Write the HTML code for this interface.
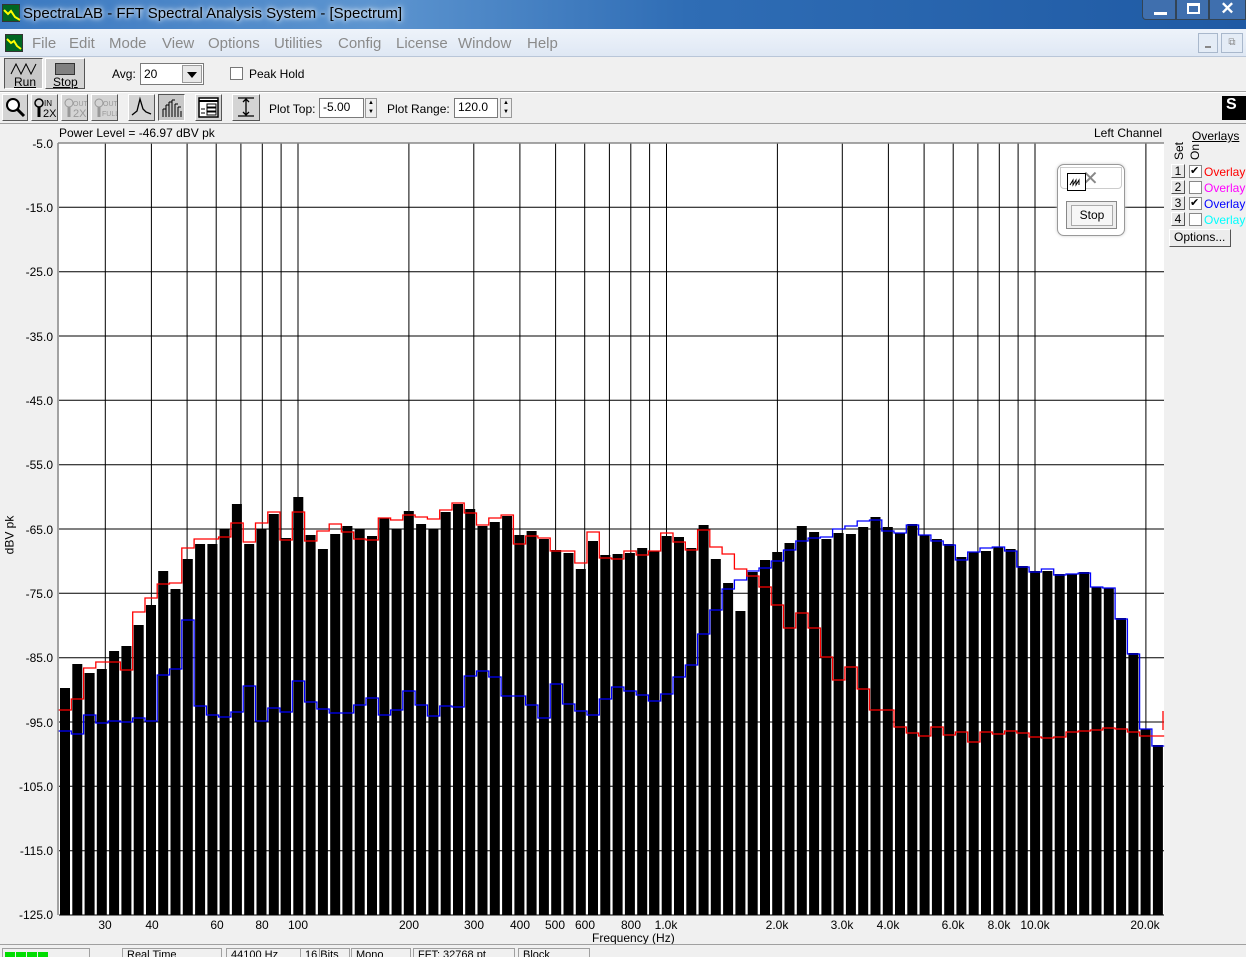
<!DOCTYPE html>
<html><head><meta charset="utf-8"><style>
*{margin:0;padding:0;box-sizing:border-box}
body{width:1246px;height:955px;overflow:hidden;background:#f0f0f0;font-family:"Liberation Sans",sans-serif;position:relative;font-size:12px;color:#000}
.a{position:absolute}
.title{left:0;top:0;width:1246px;height:29px;background:linear-gradient(90deg,#3a78c0 0%,#5d95d0 30%,#2f6db5 55%,#1f5aa4 100%);}
.menu{left:0;top:29px;width:1246px;height:28px;background:linear-gradient(#eef3fa,#dfe8f4);border-bottom:1px solid #b9c6d8}
.menu span{position:absolute;top:6px;font-size:15px;color:#8a8a8a}
.btn{position:absolute;background:#d4d4d4;border:1px solid;border-color:#fff #555 #555 #fff}
.btn.p{border-color:#555 #fff #fff #555;background:#c8c8c8}
.inp{position:absolute;background:#fff;border:1px solid #7a7a7a;font-size:12px;padding:1px 3px}
.yl{position:absolute;right:1193px;font-size:12px;text-align:right}
.xl{position:absolute;top:918px;font-size:12px;transform:translateX(-50%)}
.sb{position:absolute;top:948px;height:9px;border:1px solid #a0a0a0;border-bottom:none;font-size:11px;padding-left:4px;line-height:12px;overflow:hidden}
</style></head><body>
<div class="a title">
 <div class="a" style="left:2px;top:4px;width:18px;height:18px;background:#062;border:1px solid #333"><svg width="18" height="18"><path d="M1 5 L5 9 L8 6 L12 12 L17 15" stroke="#ff0" stroke-width="2" fill="none"/></svg></div>
 <div class="a" style="left:23px;top:5px;font-size:15px;color:#000;text-shadow:0 0 8px #fff,0 0 4px #fff">SpectraLAB - FFT Spectral Analysis System - [Spectrum]</div>
 <div class="a" style="left:1142px;top:0;width:34px;height:20px;border:1px solid #345;border-top:none;border-radius:0 0 0 4px;background:#3f6fae"><div class="a" style="left:11px;top:12px;width:13px;height:3px;background:#fff"></div></div>
 <div class="a" style="left:1176px;top:0;width:33px;height:20px;border:1px solid #345;border-top:none;background:#3f6fae"><div class="a" style="left:10px;top:3px;width:13px;height:11px;border:2px solid #fff;border-top-width:3px"></div></div>
 <div class="a" style="left:1209px;top:0;width:37px;height:20px;border:1px solid #345;border-top:none;background:#3f6fae;color:#fff;font-weight:bold;font-size:17px;text-align:center;line-height:17px">✕</div>
</div>
<div class="a menu">
 <div class="a" style="left:5px;top:5px;width:18px;height:18px;background:#062;border:1px solid #333"><svg width="16" height="16"><path d="M1 4 L5 8 L8 6 L11 11 L15 14" stroke="#ff0" stroke-width="2" fill="none"/></svg></div>
 <span style="left:32px">File</span><span style="left:69px">Edit</span><span style="left:109px">Mode</span><span style="left:162px">View</span><span style="left:208px">Options</span><span style="left:274px">Utilities</span><span style="left:338px">Config</span><span style="left:396px">License</span><span style="left:458px">Window</span><span style="left:527px">Help</span>
 <div class="a" style="left:1198px;top:4px;width:20px;height:20px;border:1px solid #a9b8cc;background:#e4ecf6"><div class="a" style="left:6px;top:12px;width:6px;height:2px;background:#888"></div></div>
 <div class="a" style="left:1221px;top:4px;width:22px;height:20px;border:1px solid #a9b8cc;background:#e4ecf6;color:#888;font-size:10px;text-align:center;line-height:18px">⧉</div>
</div>
<!-- toolbar 1 -->
<div class="btn p" style="left:4px;top:58px;width:39px;height:31px"><svg class="a" style="left:5px;top:3px" width="30" height="14"><path d="M1 12 L6 2 L11 12 L16 2 L21 12 L26 2" stroke="#000" fill="none"/></svg><div class="a" style="left:9px;top:16px;font-size:12px;text-decoration:underline">Run</div></div>
<div class="btn" style="left:45px;top:58px;width:40px;height:31px"><div class="a" style="left:9px;top:4px;width:20px;height:12px;background:#808080;border:1px solid #333"></div><div class="a" style="left:7px;top:16px;font-size:12px;text-decoration:underline">Stop</div></div>
<div class="a" style="left:112px;top:67px">Avg:</div>
<div class="inp" style="left:140px;top:63px;width:64px;height:22px;padding-top:3px">20<div class="a" style="right:1px;top:1px;width:20px;height:18px;background:#e8e8e8;border:1px solid #999"><div class="a" style="left:4px;top:6px;border:5px solid transparent;border-top:6px solid #000"></div></div></div>
<div class="a" style="left:230px;top:67px;width:13px;height:13px;border:1px solid #777;background:#fff"></div>
<div class="a" style="left:249px;top:67px">Peak Hold</div>
<div class="a" style="left:0;top:91px;width:1246px;height:1px;background:#a0a0a0"></div>
<div class="a" style="left:0;top:92px;width:1246px;height:1px;background:#fff"></div>
<!-- toolbar 2 -->
<div class="btn" style="left:2px;top:94px;width:26px;height:27px"><svg width="24" height="25"><circle cx="10" cy="10" r="6" stroke="#000" stroke-width="2" fill="#fff"/><path d="M14 14 L21 21" stroke="#000" stroke-width="3"/></svg></div>
<div class="btn" style="left:31px;top:94px;width:27px;height:27px;font-size:9px"><svg class="a" style="left:1px;top:2px" width="24" height="22"><circle cx="6" cy="6" r="4" stroke="#000" fill="none" stroke-width="1.5"/><path d="M6 10 V20" stroke="#000" stroke-width="3"/><text x="11" y="9" font-size="8" font-family="Liberation Sans">IN</text><text x="10" y="20" font-size="11" font-family="Liberation Sans">2X</text></svg></div>
<div class="btn" style="left:61px;top:94px;width:27px;height:27px"><svg class="a" style="left:1px;top:2px" width="24" height="22"><circle cx="6" cy="6" r="4" stroke="#999" fill="none"/><path d="M6 10 V20" stroke="#999" stroke-width="3"/><text x="10" y="9" font-size="7" fill="#999" font-family="Liberation Sans">OUT</text><text x="10" y="20" font-size="11" fill="#999" font-family="Liberation Sans">2X</text></svg></div>
<div class="btn" style="left:91px;top:94px;width:27px;height:27px"><svg class="a" style="left:1px;top:2px" width="24" height="22"><circle cx="6" cy="6" r="4" stroke="#999" fill="none"/><path d="M6 10 V20" stroke="#999" stroke-width="3"/><text x="10" y="9" font-size="7" fill="#999" font-family="Liberation Sans">OUT</text><text x="9" y="19" font-size="7" fill="#999" font-family="Liberation Sans">FULL</text></svg></div>
<div class="btn" style="left:128px;top:94px;width:27px;height:27px"><svg width="25" height="25"><path d="M3 20 L8 16 L11 4 L14 14 L17 17 L22 19" stroke="#000" fill="none" stroke-width="1.3"/></svg></div>
<div class="btn p" style="left:158px;top:94px;width:27px;height:27px"><svg width="25" height="25"><path d="M4 22 V14 M7 22 V10 M10 22 V7 M13 22 V5 M16 22 V9 M19 22 V12 M22 22 V16 M4 14 H7 M7 10 H10 M10 7 H13 M13 5 H16 M16 9 H19 M19 12 H22" stroke="#000" fill="none"/></svg></div>
<div class="btn" style="left:195px;top:94px;width:27px;height:27px"><svg width="25" height="25"><rect x="3" y="3" width="19" height="19" fill="#fff" stroke="#000" stroke-width="1.5"/><path d="M3 6 H22" stroke="#000" stroke-width="2"/><rect x="11" y="9" width="9" height="3" fill="none" stroke="#000"/><rect x="11" y="13" width="9" height="3" fill="none" stroke="#000"/><rect x="11" y="17" width="9" height="3" fill="none" stroke="#000"/><path d="M5 14 H9 M5 18 H9" stroke="#000"/></svg></div>
<div class="btn" style="left:232px;top:94px;width:28px;height:27px"><svg width="26" height="25"><path d="M5 3 H21 M5 21 H21 M13 4 V20 M10 7 L13 4 L16 7 M10 17 L13 20 L16 17" stroke="#000" fill="none" stroke-width="1.3"/></svg></div>
<div class="a" style="left:269px;top:102px">Plot Top:</div>
<div class="inp" style="left:319px;top:98px;width:45px;height:20px">-5.00</div>
<div class="a" style="left:365px;top:98px;width:12px;height:20px;border:1px solid #999;background:#eee;font-size:6px;text-align:center;line-height:9px">▲<br>▼</div>
<div class="a" style="left:387px;top:102px">Plot Range:</div>
<div class="inp" style="left:454px;top:98px;width:44px;height:20px">120.0</div>
<div class="a" style="left:500px;top:98px;width:12px;height:20px;border:1px solid #999;background:#eee;font-size:6px;text-align:center;line-height:9px">▲<br>▼</div>
<div class="a" style="left:1222px;top:96px;width:24px;height:24px;background:#000;color:#fff;font-weight:bold;font-size:16px;padding-left:4px">S</div>
<div class="a" style="left:0;top:123px;width:1246px;height:1px;background:#a0a0a0"></div>
<!-- chart labels -->
<div class="a" style="left:59px;top:126px">Power Level = -46.97 dBV pk</div>
<div class="a" style="left:1094px;top:126px">Left Channel</div>
<div class="yl" style="top:137px">-5.0</div><div class="yl" style="top:201px">-15.0</div><div class="yl" style="top:265px">-25.0</div><div class="yl" style="top:330px">-35.0</div><div class="yl" style="top:394px">-45.0</div><div class="yl" style="top:458px">-55.0</div><div class="yl" style="top:523px">-65.0</div><div class="yl" style="top:587px">-75.0</div><div class="yl" style="top:651px">-85.0</div><div class="yl" style="top:716px">-95.0</div><div class="yl" style="top:780px">-105.0</div><div class="yl" style="top:844px">-115.0</div><div class="yl" style="top:908px">-125.0</div>
<div class="a" style="left:-10px;top:528px;transform:rotate(-90deg);font-size:12px">dBV pk</div>
<div class="xl" style="left:105px">30</div><div class="xl" style="left:152px">40</div><div class="xl" style="left:217px">60</div><div class="xl" style="left:262px">80</div><div class="xl" style="left:298px">100</div><div class="xl" style="left:409px">200</div><div class="xl" style="left:474px">300</div><div class="xl" style="left:520px">400</div><div class="xl" style="left:555px">500</div><div class="xl" style="left:585px">600</div><div class="xl" style="left:631px">800</div><div class="xl" style="left:666px">1.0k</div><div class="xl" style="left:777px">2.0k</div><div class="xl" style="left:842px">3.0k</div><div class="xl" style="left:888px">4.0k</div><div class="xl" style="left:953px">6.0k</div><div class="xl" style="left:999px">8.0k</div><div class="xl" style="left:1035px">10.0k</div><div class="xl" style="left:1145px">20.0k</div>
<div class="a" style="left:592px;top:931px">Frequency (Hz)</div>
<svg class="a" id="ch" style="left:0;top:0" width="1246" height="955"></svg>
<!-- stop popup -->
<div class="a" style="left:1057px;top:164px;width:68px;height:72px;background:#fff;border:1px solid #999;border-radius:7px;box-shadow:0 0 3px #ccc">
 <div class="a" style="left:2px;top:2px;width:62px;height:22px;border:1px solid #ccc;border-radius:0 0 4px 4px"></div>
 <div class="a" style="left:24px;top:1px;font-size:20px;color:#888">✕</div>
 <div class="a" style="left:9px;top:8px;width:19px;height:18px;background:#fff;border:1.5px solid #000"><svg width="16" height="14"><path d="M2 11 L5 6 V11 L8 6 V11 L11 6 V11" stroke="#000" fill="none"/></svg></div>
 <div class="a" style="left:8px;top:36px;width:51px;height:28px;border:1px solid #888;background:#eee"><div class="a" style="left:4px;top:3px;width:42px;height:21px;border:1px solid #aaa;background:#f6f6f6;text-align:center;line-height:19px">Stop</div></div>
</div>
<!-- overlays -->
<div class="a" style="left:1192px;top:129px;text-decoration:underline">Overlays</div>
<div class="a" style="left:1172px;top:160px;transform:rotate(-90deg);transform-origin:0 0;font-size:12px">Set</div>
<div class="a" style="left:1188px;top:160px;transform:rotate(-90deg);transform-origin:0 0;font-size:12px">On</div>
<div id="ov"></div>
<div class="btn" style="left:1169px;top:229px;width:62px;height:18px;background:#ececec;padding-left:4px;line-height:15px">Options...</div>
<!-- status -->
<div class="a" style="left:0;top:944px;width:1246px;height:1px;background:#a0a0a0"></div>
<div class="sb" style="left:2px;width:88px;padding:2px 2px"><span style="display:inline-block;width:10px;height:8px;background:#0d0;margin-right:1px"></span><span style="display:inline-block;width:10px;height:8px;background:#0d0;margin-right:1px"></span><span style="display:inline-block;width:10px;height:8px;background:#0d0;margin-right:1px"></span><span style="display:inline-block;width:10px;height:8px;background:#0d0"></span></div>
<div class="sb" style="left:122px;width:100px">Real Time</div>
<div class="sb" style="left:226px;width:94px">44100 Hz</div>
<div class="sb" style="left:298px;width:50px;left:300px">16 Bits</div>
<div class="sb" style="left:351px;width:60px">Mono</div>
<div class="sb" style="left:413px;width:102px">FFT: 32768 pt</div>
<div class="sb" style="left:518px;width:72px">Block</div>
<script>
var S='http://www.w3.org/2000/svg',svg=document.getElementById('ch'),h='';
function Y(d){return 143+(-5-d)*6.433;}
function X(f){return 298+368.5*Math.log10(f/100);}
h+='<rect x="59" y="143" width="1105" height="772" fill="#fff"/>';
var bars=[688,664,673,669,651,646,625,605,571,589,559,544,544,529,504,544,529,514,538,497,535,549,534,526,529,536,518,529,511,524,529,512,504,509,526,522,516,535,531,539,550,553,569,541,555,554,553,548,551,536,537,548,525,559,583,611,572,560,552,543,526,532,539,533,534,527,517,527,533,524,535,539,544,557,552,551,547,549,566,571,571,574,574,572,587,588,618,653,729,745];
var red=[710,699,668,662,662,670,612,598,584,583,548,539,539,537,523,542,523,512,540,512,541,531,524,532,539,540,518,520,515,517,519,510,503,513,525,518,515,544,536,538,551,551,563,532,558,559,551,555,551,533,542,550,530,547,554,569,576,587,605,628,613,628,657,680,667,689,710,710,727,733,736,727,735,732,742,732,734,731,733,737,738,737,732,731,730,728,729,732,736,736];
var blue=[731,734,715,723,721,722,718,721,675,669,620,706,715,717,712,686,721,708,712,681,702,709,713,713,705,698,715,710,691,705,716,706,707,676,671,677,696,696,705,718,684,704,711,715,699,687,691,695,701,694,677,665,634,610,589,580,571,568,561,550,541,538,537,529,526,521,520,531,533,525,535,541,545,560,552,548,547,551,567,572,569,575,574,573,587,588,619,654,729,746];
var P=12.28,x0=60;
for(var i=0;i<bars.length;i++){var x=x0+i*P;h+='<rect x="'+x.toFixed(1)+'" y="'+bars[i]+'" width="10" height="'+(915-bars[i])+'" fill="#000"/>';}
// grid
var g='';
for(var dec=10;dec<=10000;dec*=10)for(var k=1;k<10;k++){var f=dec*k;var x=X(f);if(x>60&&x<1164)g+='M'+x.toFixed(1)+' 143V915';}
for(var j=0;j<=12;j++){var y=(143+j*772/12).toFixed(1);g+='M59 '+y+'H1164';}
h+='<path d="'+g+'" stroke="#000" stroke-width="1"/>';
function step(a,c){var d='M58 '+a[0];for(var i=0;i<a.length;i++){var xa=x0+i*P-1,xb=x0+(i+1)*P-1;d+='L'+xa.toFixed(1)+' '+a[i]+'L'+xb.toFixed(1)+' '+a[i];}return '<path d="'+d+'" stroke="'+c+'" stroke-width="1.3" fill="none"/>';}
h+=step(blue,'#00f');h+=step(red,'#f00');
h+='<path d="M1163 711V730" stroke="#f00" stroke-width="1.3"/>';
h+='<path d="M58 143V915M58 143H1164" stroke="#888" stroke-width="1.5"/>';
svg.innerHTML=h;
var ov='',cols=['#f00','#f0f','#00f','#0ff'],chk=[1,0,1,0];
for(var i=0;i<4;i++){var t=164+i*16;ov+='<div class="btn" style="left:1171px;top:'+t+'px;width:14px;height:14px;font-size:12px;line-height:12px;text-align:center;background:#e8e8e8">'+(i+1)+'</div><div class="a" style="left:1189px;top:'+(t+1)+'px;width:13px;height:13px;border:1px solid #888;background:#fff;font-size:11px;line-height:11px">'+(chk[i]?'✔':'')+'</div><div class="a" style="left:1204px;top:'+(t+1)+'px;color:'+cols[i]+'">Overlay</div>';}
document.getElementById('ov').innerHTML=ov;
</script>
</body></html>
